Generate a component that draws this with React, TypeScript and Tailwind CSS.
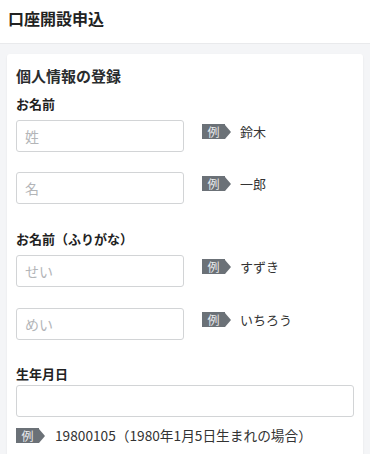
const font = { fontFamily: '"Noto Sans CJK JP", "Noto Sans", sans-serif' };

function ExampleBadge() {
  return (
    <span className="flex items-center shrink-0">
      <span className="h-[15px] w-[23px] bg-[#6b7177] text-[#e9ebed] text-[12px] leading-[15px] flex items-center justify-center">
        例
      </span>
      <span className="w-0 h-0 border-y-[7.5px] border-y-transparent border-l-[6px] border-l-[#6b7177]" />
    </span>
  );
}

function NameRow({ placeholder, example }: { placeholder: string; example: string }) {
  return (
    <div className="flex items-start">
      <input
        placeholder={placeholder}
        className="w-[168px] h-[32px] rounded-[3px] border border-[#d2d4d6] px-[8px] text-[14px] text-[#333] placeholder:text-[#b3b5b8] outline-none"
      />
      <div className="flex items-center ml-[18px] mt-[4px]">
        <ExampleBadge />
        <span className="ml-[9px] text-[13px] leading-[15px] text-[#333]">{example}</span>
      </div>
    </div>
  );
}

export default function App() {
  return (
    <div style={font} className="w-[370px] h-[454px] overflow-hidden bg-[#f4f5f7] text-[#222]">
      {/* Header */}
      <header className="h-[44px] bg-white border-b border-[#e9eaec] px-[8px] pt-[7px]">
        <h1 className="text-[16px] leading-[22px] font-bold">口座開設申込</h1>
      </header>

      {/* Card */}
      <div className="mx-[7px] mt-[10px] bg-white rounded-[3px] shadow-[0_1px_2px_rgba(0,0,0,0.08)] px-[9px] pt-[11px] pb-[16px]">
        <h2 className="text-[15px] leading-[21px] font-bold text-[#2a2c2e]">個人情報の登録</h2>

        <p className="mt-[9px] text-[13px] leading-[18px] font-bold">お名前</p>
        <div className="mt-[7px] flex flex-col gap-[20px]">
          <NameRow placeholder="姓" example="鈴木" />
          <NameRow placeholder="名" example="一郎" />
        </div>

        <p className="mt-[26px] text-[13px] leading-[18px] font-bold">お名前（ふりがな）</p>
        <div className="mt-[7px] flex flex-col gap-[21px]">
          <NameRow placeholder="せい" example="すずき" />
          <NameRow placeholder="めい" example="いちろう" />
        </div>

        <p className="mt-[25px] text-[13px] leading-[18px] font-bold">生年月日</p>
        <input className="mt-[2px] w-full h-[32px] rounded-[3px] border border-[#d2d4d6] px-[8px] text-[14px] outline-none" />
        <div className="mt-[11px] flex items-center">
          <ExampleBadge />
          <span className="ml-[10px] text-[13.7px] leading-[15px] text-[#333]">
            19800105（1980年1月5日生まれの場合）
          </span>
        </div>
      </div>
    </div>
  );
}
